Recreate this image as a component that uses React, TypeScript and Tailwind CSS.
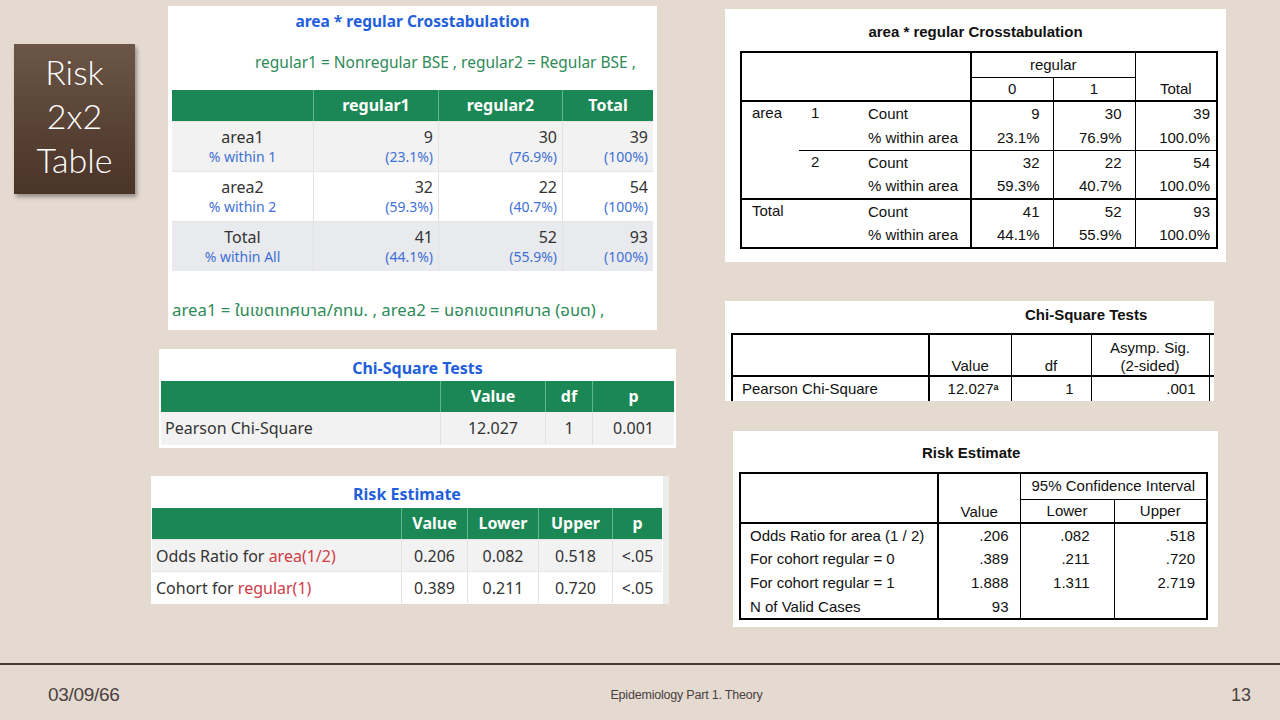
import React from "react"

const GREEN = "bg-[#1b8754]"

const CROSS_ROWS = [
  { label: "area1", sub: "% within 1", bg: "bg-[#f2f2f2]", cells: [["9", "(23.1%)"], ["30", "(76.9%)"], ["39", "(100%)"]] },
  { label: "area2", sub: "% within 2", bg: "bg-white", cells: [["32", "(59.3%)"], ["22", "(40.7%)"], ["54", "(100%)"]] },
  { label: "Total", sub: "% within All", bg: "bg-[#e8eaed]", cells: [["41", "(44.1%)"], ["52", "(55.9%)"], ["93", "(100%)"]] },
]

const SPSS_CROSS = [
  { a: "area", b: "1", rows: [["Count", "9", "30", "39"], ["% within area", "23.1%", "76.9%", "100.0%"]] },
  { a: "", b: "2", rows: [["Count", "32", "22", "54"], ["% within area", "59.3%", "40.7%", "100.0%"]] },
  { a: "Total", b: "", rows: [["Count", "41", "52", "93"], ["% within area", "44.1%", "55.9%", "100.0%"]] },
]

const SPSS_RISK = [
  ["Odds Ratio for area (1 / 2)", ".206", ".082", ".518"],
  ["For cohort regular = 0", ".389", ".211", ".720"],
  ["For cohort regular = 1", "1.888", "1.311", "2.719"],
  ["N of Valid Cases", "93", "", ""],
]

function LeftCrosstab() {
  return (
    <div className="absolute left-[168px] top-[6px] w-[489px] h-[324px] bg-white font-['Noto_Sans','Open_Sans',sans-serif]">
      <div className="h-[30px] pt-[3px] text-center text-[15.5px] font-bold text-[#1f5fdc] leading-[24px]">
        area * regular Crosstabulation
      </div>
      <div className="pl-[87px] pt-[14px] h-[54px] text-[15.5px] text-[#2e8b57] leading-[24px]">
        regular1 = Nonregular BSE , regular2 = Regular BSE ,
      </div>
      <div className="ml-[4px] w-[481px]">
        <div className={`flex h-[31px] ${GREEN} text-white font-bold text-[16px] leading-[31px]`}>
          <div className="w-[142px] border-r border-[#5fb98a]" />
          <div className="w-[125px] text-center border-r border-[#5fb98a]">regular1</div>
          <div className="w-[124px] text-center border-r border-[#5fb98a]">regular2</div>
          <div className="flex-1 text-center">Total</div>
        </div>
        {CROSS_ROWS.map((r) => (
          <div key={r.label} className={`flex h-[50px] ${r.bg} border-t border-[#e6e6e6]`}>
            <div className="w-[142px] flex flex-col items-center justify-center border-r border-[#e2e2e2]">
              <span className="text-[16px] text-[#333] leading-[20px]">{r.label}</span>
              <span className="text-[14px] text-[#3f70d6] leading-[20px]">{r.sub}</span>
            </div>
            {r.cells.map(([n, p], i) => (
              <div
                key={i}
                className={`${i === 0 ? "w-[125px]" : i === 1 ? "w-[124px]" : "flex-1"} flex flex-col items-end justify-center pr-[5px] ${i < 2 ? "border-r border-[#e2e2e2]" : ""}`}
              >
                <span className="text-[16px] text-[#333] leading-[20px]">{n}</span>
                <span className="text-[14px] text-[#3f70d6] leading-[20px]">{p}</span>
              </div>
            ))}
          </div>
        ))}
      </div>
      <div className="pl-[4px] pt-[27px] text-[16.8px] text-[#2e8b57] leading-[24px] font-['Noto_Sans','Noto_Sans_Thai','Tahoma',sans-serif]">
        area1 = ในเขตเทศบาล/กทม. , area2 = นอกเขตเทศบาล (อบต) ,
      </div>
    </div>
  )
}

function LeftChi() {
  return (
    <div className="absolute left-[159px] top-[349px] w-[517px] h-[99px] bg-white font-['Noto_Sans','Open_Sans',sans-serif]">
      <div className="h-[32px] pt-[7px] text-center text-[16px] font-bold text-[#1f5fdc] leading-[24px]">Chi-Square Tests</div>
      <div className="mx-[2px]">
        <div className={`flex h-[31px] ${GREEN} text-white font-bold text-[16px] leading-[31px]`}>
          <div className="w-[280px] border-r border-[#5fb98a]" />
          <div className="w-[105px] text-center border-r border-[#5fb98a]">Value</div>
          <div className="w-[47px] text-center border-r border-[#5fb98a]">df</div>
          <div className="flex-1 text-center">p</div>
        </div>
        <div className="flex h-[33px] bg-[#f2f2f2] text-[16px] text-[#333] leading-[33px]">
          <div className="w-[280px] pl-[4px] border-r border-[#e2e2e2]">Pearson Chi-Square</div>
          <div className="w-[105px] text-center border-r border-[#e2e2e2]">12.027</div>
          <div className="w-[47px] text-center border-r border-[#e2e2e2]">1</div>
          <div className="flex-1 text-center">0.001</div>
        </div>
      </div>
    </div>
  )
}

function LeftRisk() {
  const rows = [
    { pre: "Odds Ratio for ", red: "area(1/2)", v: ["0.206", "0.082", "0.518", "<.05"], bg: "bg-[#f2f2f2]" },
    { pre: "Cohort for ", red: "regular(1)", v: ["0.389", "0.211", "0.720", "<.05"], bg: "bg-white" },
  ]
  const widths = ["w-[66px]", "w-[71px]", "w-[74px]", "flex-1"]
  return (
    <div className="absolute left-[151px] top-[476px] w-[518px] h-[128px] bg-white border-r-[6px] border-[#ececec] font-['Noto_Sans','Open_Sans',sans-serif]">
      <div className="h-[32px] pt-[6px] text-center text-[16px] font-bold text-[#1f5fdc] leading-[24px]">Risk Estimate</div>
      <div className="ml-[1px] w-[510px]">
        <div className={`flex h-[31px] ${GREEN} text-white font-bold text-[16px] leading-[31px]`}>
          <div className="w-[250px] border-r border-[#5fb98a]" />
          {["Value", "Lower", "Upper", "p"].map((h, i) => (
            <div key={h} className={`${widths[i]} text-center ${i < 3 ? "border-r border-[#5fb98a]" : ""}`}>{h}</div>
          ))}
        </div>
        {rows.map((r) => (
          <div key={r.red} className={`flex h-[32px] ${r.bg} text-[16px] text-[#333] leading-[32px] border-t border-[#e6e6e6]`}>
            <div className="w-[250px] pl-[4px] border-r border-[#e2e2e2]">
              {r.pre}
              <span className="text-[#d13b45]">{r.red}</span>
            </div>
            {r.v.map((v, i) => (
              <div key={i} className={`${widths[i]} text-center ${i < 3 ? "border-r border-[#e2e2e2]" : ""}`}>{v}</div>
            ))}
          </div>
        ))}
      </div>
    </div>
  )
}

function SpssCrosstab() {
  return (
    <div className="absolute left-[725px] top-[9px] w-[501px] h-[253px] bg-white font-['Liberation_Sans',Arial,sans-serif] text-[#111]">
      <div className="h-[42px] pt-[14px] text-center text-[15px] font-bold leading-[18px]">area * regular Crosstabulation</div>
      <table className="ml-[15px] w-[478px] border-collapse border-2 border-black text-[15px] leading-[22px]">
        <tbody>
          <tr className="h-[25px]">
            <td rowSpan={2} colSpan={3} className="w-[232px] border-2 border-black" />
            <td colSpan={2} className="text-center border-b border-black">regular</td>
            <td rowSpan={2} className="w-[82px] border-l border-black text-center align-bottom">Total</td>
          </tr>
          <tr className="h-[24px] border-b-2 border-black">
            <td className="w-[82px] text-center border-r border-black">0</td>
            <td className="w-[82px] text-center border-r border-black">1</td>
          </tr>
          {SPSS_CROSS.map((g, gi) =>
            g.rows.map((r, ri) => (
              <tr
                key={`${gi}-${ri}`}
                className={`h-[24.5px] ${ri === 1 && gi === 0 ? "border-b border-black" : ""} ${ri === 1 && gi === 1 ? "border-b-2 border-black" : ""}`}
              >
                {ri === 0 && gi !== 1 && (
                  <td rowSpan={gi === 0 ? 4 : 2} className="w-[58px] pl-[10px] align-top">{g.a}</td>
                )}
                <td className="w-[68px] pl-[12px] align-top">{ri === 0 ? g.b : ""}</td>
                <td className="pl-[1px] border-r-2 border-black">{r[0]}</td>
                <td className="text-right pr-[13px] border-r border-black">{r[1]}</td>
                <td className="text-right pr-[13px] border-r border-black">{r[2]}</td>
                <td className="text-right pr-[6px]">{r[3]}</td>
              </tr>
            ))
          )}
        </tbody>
      </table>
    </div>
  )
}

function SpssChi() {
  return (
    <div className="absolute left-[725px] top-[301px] w-[489px] h-[100px] bg-white overflow-hidden font-['Liberation_Sans',Arial,sans-serif] text-[#111]">
      <div className="h-[32px] pt-[5px] pl-[300px] text-[15px] font-bold leading-[18px]">Chi-Square Tests</div>
      <table className="ml-[6px] w-[500px] border-collapse border-2 border-black text-[15px] leading-[18px]">
        <tbody>
          <tr className="h-[42px] border-b-2 border-black">
            <td className="w-[197px] border-r-2 border-black" />
            <td className="w-[82px] text-center align-bottom border-r border-black">Value</td>
            <td className="w-[80px] text-center align-bottom border-r border-black">df</td>
            <td className="w-[118px] text-center align-bottom border-r border-black">
              Asymp. Sig.
              <br />
              (2-sided)
            </td>
            <td />
          </tr>
          <tr className="h-[26px]">
            <td className="pl-[9px] border-r-2 border-black">Pearson Chi-Square</td>
            <td className="text-right pr-[12px] border-r border-black">
              12.027<sup className="text-[9px] font-bold">a</sup>
            </td>
            <td className="text-right pr-[17px] border-r border-black">1</td>
            <td className="text-right pr-[13px] border-r border-black">.001</td>
            <td />
          </tr>
        </tbody>
      </table>
    </div>
  )
}

function SpssRisk() {
  return (
    <div className="absolute left-[733px] top-[431px] w-[485px] h-[196px] bg-white font-['Liberation_Sans',Arial,sans-serif] text-[#111]">
      <div className="h-[41px] pt-[13px] pl-[189px] text-[15px] font-bold leading-[18px]">Risk Estimate</div>
      <table className="ml-[6px] w-[469px] border-collapse border-2 border-black text-[15px] leading-[20px]">
        <tbody>
          <tr className="h-[26px]">
            <td rowSpan={2} className="w-[198px] border-2 border-black" />
            <td rowSpan={2} className="w-[82px] text-center align-bottom border-r border-black">Value</td>
            <td colSpan={2} className="text-center border-b border-black">95% Confidence Interval</td>
          </tr>
          <tr className="h-[24px] border-b-2 border-black">
            <td className="w-[94px] text-center border-r border-black">Lower</td>
            <td className="text-center">Upper</td>
          </tr>
          {SPSS_RISK.map((r, i) => (
            <tr key={i} className="h-[24px]">
              <td className="pl-[9px] border-r-2 border-black">{r[0]}</td>
              <td className="text-right pr-[11px] border-r border-black">{r[1]}</td>
              <td className="text-right pr-[24px] border-r border-black">{r[2]}</td>
              <td className="text-right pr-[11px]">{r[3]}</td>
            </tr>
          ))}
        </tbody>
      </table>
    </div>
  )
}

export default function App() {
  return (
    <div className="relative w-[1280px] h-[720px] overflow-hidden bg-[#e4dad0]">
      {/* title tile */}
      <div className="absolute left-[14px] top-[44px] w-[121px] h-[150px] pb-[6px] bg-gradient-to-b from-[#6b5647] to-[#4a3327] shadow-[2px_3px_4px_rgba(0,0,0,0.35)] flex flex-col items-center justify-center text-white text-[34px] leading-[44px] font-['Lato','Open_Sans',sans-serif] font-light">
        <span>Risk</span>
        <span>2x2</span>
        <span>Table</span>
      </div>

      <LeftCrosstab />
      <LeftChi />
      <LeftRisk />
      <SpssCrosstab />
      <SpssChi />
      <SpssRisk />

      {/* footer */}
      <div className="absolute left-0 top-[663px] w-full">
        <div className="h-[2px] bg-[#4a3a30]" />
        <div className="flex items-center justify-between h-[60px] px-[48px] pr-[29px] text-[#4b4141] font-['Liberation_Sans',Arial,sans-serif]">
          <span className="text-[19px] w-[200px] tracking-[-0.3px]">03/09/66</span>
          <span className="text-[12.5px] ml-[74px] tracking-[-0.2px]">Epidemiology Part 1. Theory</span>
          <span className="text-[18px] w-[200px] text-right">13</span>
        </div>
      </div>
    </div>
  )
}
